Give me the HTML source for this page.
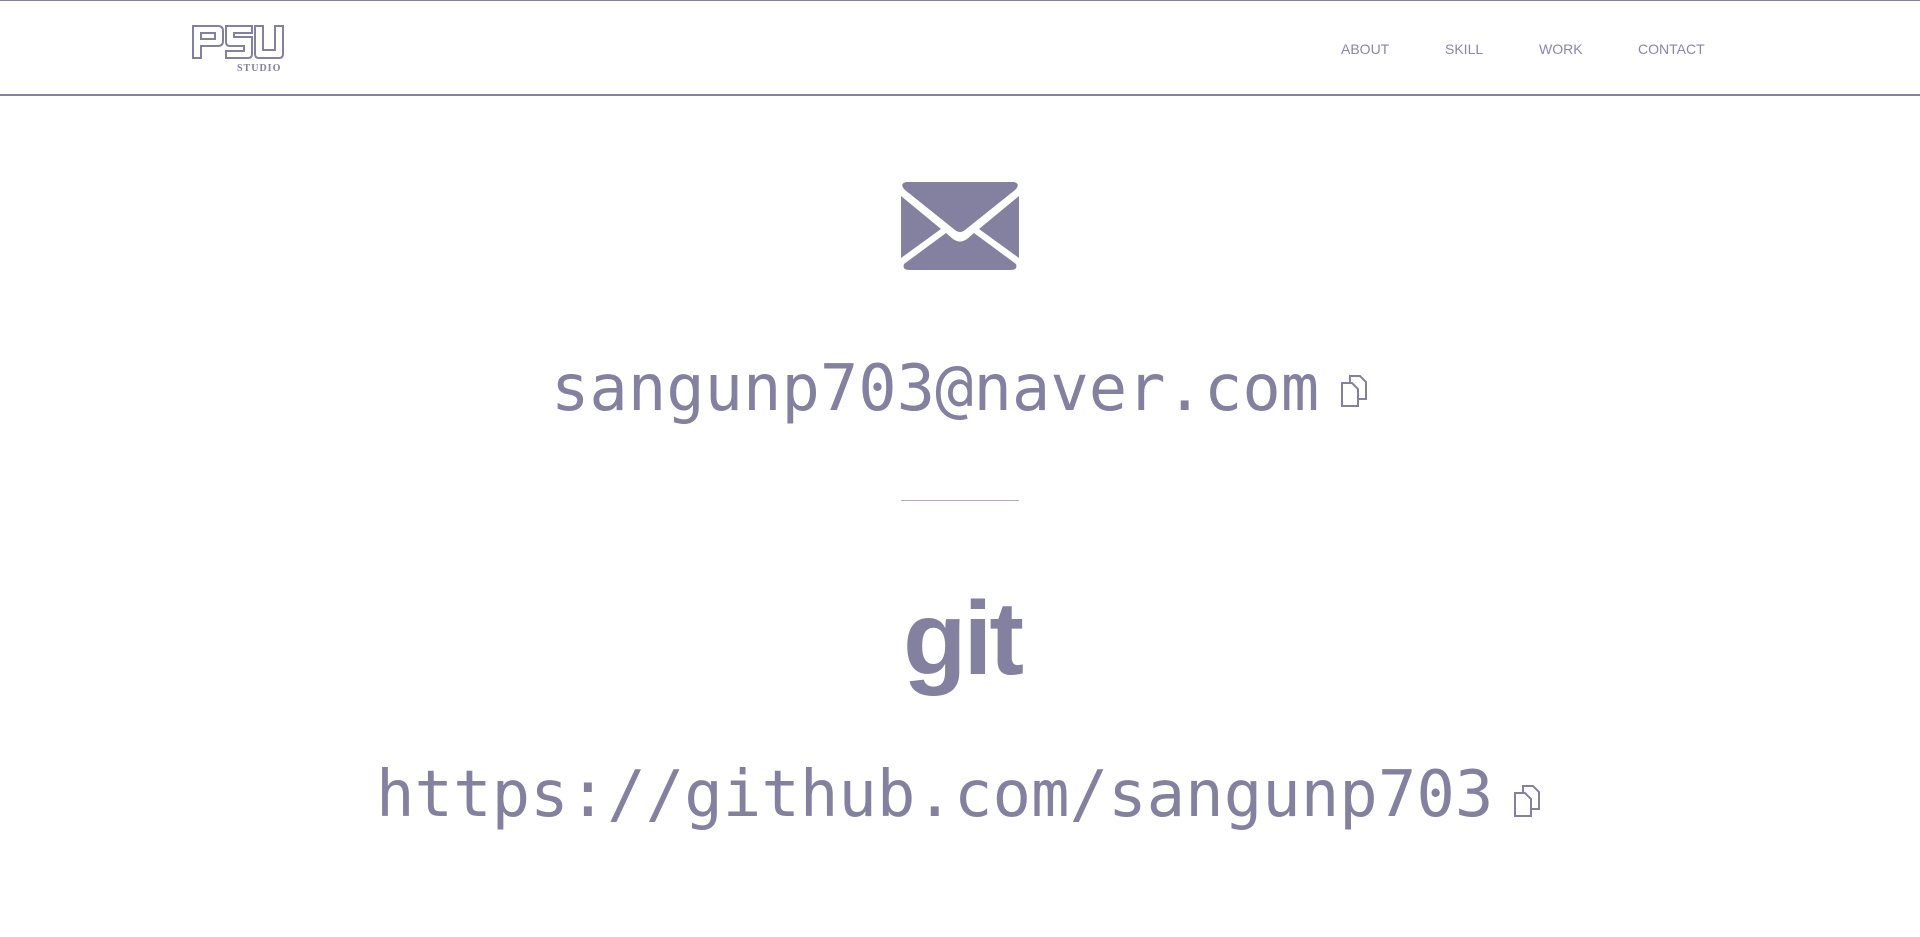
<!DOCTYPE html>
<html><head><meta charset="utf-8"><style>
html,body{margin:0;padding:0;background:#fff;width:1920px;height:937px;overflow:hidden;position:relative;font-family:"Liberation Sans","DejaVu Sans",sans-serif;color:#8480a0}
.top{position:absolute;left:0;top:0;width:1920px;height:1px;background:#8480a0}
.hdr{position:absolute;left:0;top:94px;width:1920px;height:2px;background:#8480a0}
.nav{position:absolute;top:41px;font-size:14px;color:#8a86a6}
.mono{position:absolute;font-family:"DejaVu Sans Mono","Liberation Mono",monospace;color:#8480a0;white-space:nowrap;line-height:1}
</style></head><body>
<div class="top"></div>
<svg style="position:absolute;left:191px;top:24px" width="96" height="50" viewBox="0 0 96 50">
<g fill="none" stroke="#8480a0" stroke-width="2">
<path d="M2 2 H27 Q32 2 32 7 V17 Q32 22 27 22 H10 V34 H2 Z M10 9 V15 H24 V9 Z"/>
<path d="M35 2 H61 V9 H43 V13 H61 V30 Q61 34 57 34 H35 V27 H53 V22 H39 Q35 22 35 18 Z"/>
<path d="M64 2 H72 V26 H84 V2 H92 V30 Q92 34 88 34 H68 Q64 34 64 30 Z"/>
</g>
<text x="46" y="47" font-family="Liberation Serif,serif" font-weight="bold" font-size="10" fill="#8480a0" letter-spacing="1">STUDIO</text>
</svg>
<div class="nav" style="left:1341px">ABOUT</div>
<div class="nav" style="left:1445px">SKILL</div>
<div class="nav" style="left:1539px">WORK</div>
<div class="nav" style="left:1638px">CONTACT</div>
<div class="hdr"></div>

<svg style="position:absolute;left:901px;top:182px" width="118" height="88" viewBox="0 0 118 88">
<path d="M5 0 H113 Q120 2 114 8 L64 48 Q59 52 54 48 L4 8 Q-2 2 5 0 Z" fill="#8480a0"/>
<path d="M0 14 L40 47 L0 76 Z" fill="#8480a0"/>
<path d="M118 14 L78 47 L118 76 Z" fill="#8480a0"/>
<path d="M45 51 L52 57 Q59 62 66 57 L73 51 L115 82 Q117 88 110 88 H8 Q1 88 3 82 Z" fill="#8480a0"/>
</svg>

<div class="mono" style="left:551px;top:358px;font-size:63.8px">sangunp703@naver.com</div>
<svg style="position:absolute;left:1340px;top:375px" width="28" height="33" viewBox="0 0 28 33"><g fill="#fff" stroke="#8480a0" stroke-width="2"><path d="M10 1 H20 L26 7 V24 H10 Z"/><path d="M2 8 H12 L18 14 V31 H2 Z"/></g></svg>

<div style="position:absolute;left:901px;top:500px;width:118px;height:1px;background:#b8a8c8"></div>

<div style="position:absolute;left:903px;top:587px;font-family:'Liberation Sans',sans-serif;font-weight:bold;font-size:104px;letter-spacing:-3px;line-height:1;color:#8480a0">git</div>

<div class="mono" style="left:376px;top:763px;font-size:64px">https://github.com/sangunp703</div>
<svg style="position:absolute;left:1513px;top:785px" width="28" height="33" viewBox="0 0 28 33"><g fill="#fff" stroke="#8480a0" stroke-width="2"><path d="M10 1 H20 L26 7 V24 H10 Z"/><path d="M2 8 H12 L18 14 V31 H2 Z"/></g></svg>
</body></html>
